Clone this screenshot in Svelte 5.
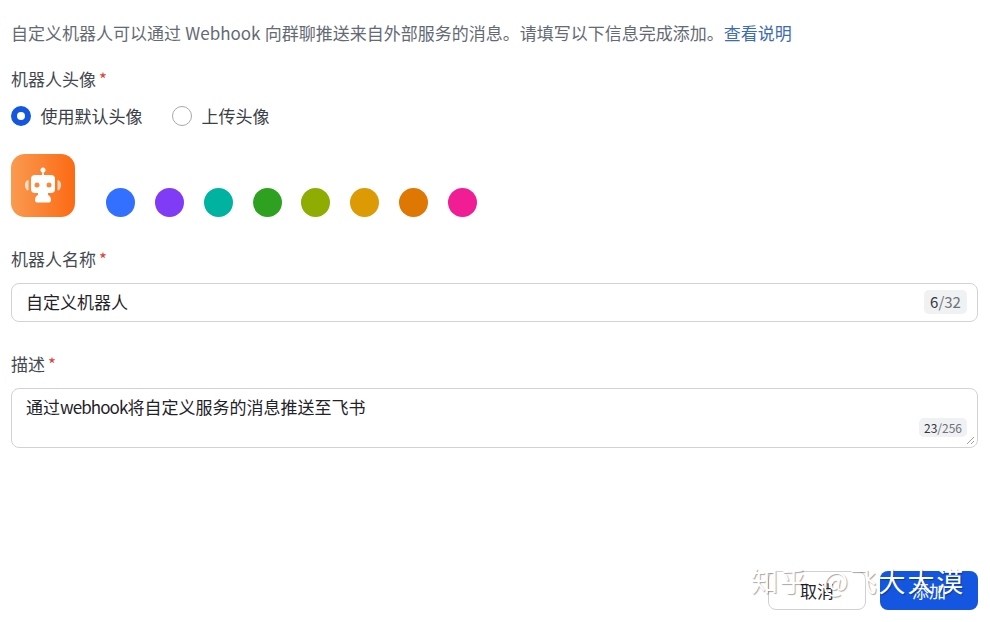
<script>
  const colors = ['#3370ff', '#7f3bf5', '#00b3a1', '#2ea121', '#8fac02', '#dc9b04', '#de7802', '#f01d94'];
</script>

<div class="page">
  <p class="intro">自定义机器人可以通过 Webhook 向群聊推送来自外部服务的消息。请填写以下信息完成添加。<a href="#help">查看说明</a></p>

  <div class="label first">机器人头像<span class="star">*</span></div>
  <div class="radios">
    <label class="radio"><span class="dot on"></span>使用默认头像</label>
    <label class="radio"><span class="dot"></span>上传头像</label>
  </div>

  <div class="avatars">
    <div class="avatar">
      <svg width="64" height="63" viewBox="0 0 64 63" fill="#fff">
        <circle cx="32" cy="16" r="2.500" />
        <rect x="31.200" y="17" width="1.600" height="5" />
        <rect x="20" y="21" width="24" height="18" rx="4" />
        <rect x="27" y="38" width="10" height="4" />
        <path d="M24 46c0-3 1.500-5 4-5h8c2.500 0 4 2 4 5 0 1.500-.8 2.500-2 2.500H26c-1.200 0-2-1-2-2.500z" />
        <circle cx="26" cy="31" r="2.500" fill="#f58a3a" />
        <circle cx="38" cy="31" r="2.500" fill="#f58a3a" />
        <path d="M16.500 26C13 28 13 34 16.500 36.500L17.500 36V26.500Z" opacity=".7" />
        <path d="M47.500 26C51 28 51 34 47.500 36.500L46.500 36V26.500Z" opacity=".7" />
      </svg>
    </div>
    <div class="swatches">
      {#each colors as c}
        <span class="swatch" style="background:{c}"></span>
      {/each}
    </div>
  </div>

  <div class="label second">机器人名称<span class="star">*</span></div>
  <div class="field input">
    <span>自定义机器人</span>
    <span class="count big"><b>6</b>/32</span>
  </div>

  <div class="label third">描述<span class="star">*</span></div>
  <div class="field area">
    <span>通过<span class="latin">webhook</span>将自定义服务的消息推送至飞书</span>
    <span class="count small"><b>23</b>/256</span>
    <svg class="grip" width="9" height="9" viewBox="0 0 9 9" stroke="#9a9da3" stroke-width="1" fill="none">
      <path d="M1 8 8 1M5 8 8 5" />
    </svg>
  </div>

  <div class="footer">
    <button class="btn cancel">取消</button>
    <button class="btn add">添加</button>
    <div class="mark">知乎 @飞大大漠</div>
  </div>
</div>

<style>
  :global(body) {
    margin: 0;
    background: #fff;
  }
  .page {
    width: 990px;
    height: 622px;
    box-sizing: border-box;
    padding: 0 12px 0 11px;
    position: relative;
    overflow: hidden;
    font-family: "Noto Sans CJK SC", "Liberation Sans", sans-serif;
    font-size: 17px;
    color: #1f2329;
  }
  .intro {
    margin: 0;
    padding-top: 20px;
    line-height: 25px;
    color: #646a73;
    white-space: nowrap;
    word-spacing: 0.500px;
  }
  .intro a {
    color: #3d6cb0;
    text-decoration: none;
  }
  .label {
    line-height: 25px;
    color: #44494f;
  }
  .first { margin-top: 21px; }
  .second { margin-top: 29px; }
  .third { margin-top: 29px; }
  .star {
    color: #d9423c;
    margin-left: 3px;
  }
  .radios {
    display: flex;
    gap: 29.500px;
    margin-top: 12px;
    line-height: 25px;
  }
  .radio {
    display: flex;
    align-items: center;
    gap: 9.500px;
    color: #3b4046;
  }
  .dot {
    width: 20px;
    height: 20px;
    box-sizing: border-box;
    border-radius: 50%;
    border: 1px solid #a5a9ae;
    background: #fff;
  }
  .dot.on {
    border: 6px solid #1456e0;
  }
  .avatars {
    display: flex;
    align-items: flex-end;
    margin-top: 26px;
  }
  .avatar {
    width: 64px;
    height: 63px;
    border-radius: 14px;
    background: linear-gradient(90deg, #fa9a50, #fc6a14);
  }
  .avatar svg {
    display: block;
  }
  .swatches {
    display: flex;
    gap: 19.850px;
    margin-left: 31px;
  }
  .swatch {
    width: 29px;
    height: 29px;
    border-radius: 50%;
  }
  .field {
    position: relative;
    box-sizing: border-box;
    border: 1px solid #d0d3d6;
    border-radius: 8px;
    padding: 0 14px;
    color: #1f2329;
  }
  .input {
    height: 39px;
    margin-top: 12px;
    line-height: 35px;
  }
  .area {
    height: 60px;
    margin-top: 12px;
    padding-top: 5px;
    line-height: 25px;
  }
  .latin {
    letter-spacing: -0.900px;
  }
  .count {
    position: absolute;
    background: #f0f1f3;
    color: #6d7278;
    border-radius: 5px;
    text-align: center;
  }
  .count b {
    font-weight: 400;
    color: #33383e;
  }
  .big {
    right: 10px;
    top: 6px;
    width: 43px;
    height: 24px;
    line-height: 24px;
    font-size: 15px;
  }
  .small {
    right: 10px;
    bottom: 10px;
    width: 48px;
    height: 19px;
    line-height: 19px;
    font-size: 12px;
  }
  .grip {
    position: absolute;
    right: 2px;
    bottom: 2px;
  }
  .footer {
    position: absolute;
    right: 12px;
    top: 571px;
    display: flex;
    gap: 14px;
  }
  .btn {
    width: 98px;
    height: 39px;
    box-sizing: border-box;
    border-radius: 8px;
    font: inherit;
    padding: 0;
  }
  .cancel {
    background: #fff;
    border: 1px solid #ced0d3;
    color: #1f2329;
  }
  .add {
    background: #1456e0;
    border: 0;
    color: #fff;
  }
  .mark {
    position: absolute;
    left: -17px;
    top: -8px;
    white-space: nowrap;
    font-size: 27px;
    line-height: 36px;
    color: #fff;
    text-shadow: 1px 1px 1px rgba(0, 0, 0, .35);
    letter-spacing: 1.800px;
    word-spacing: 6px;
  }
</style>
